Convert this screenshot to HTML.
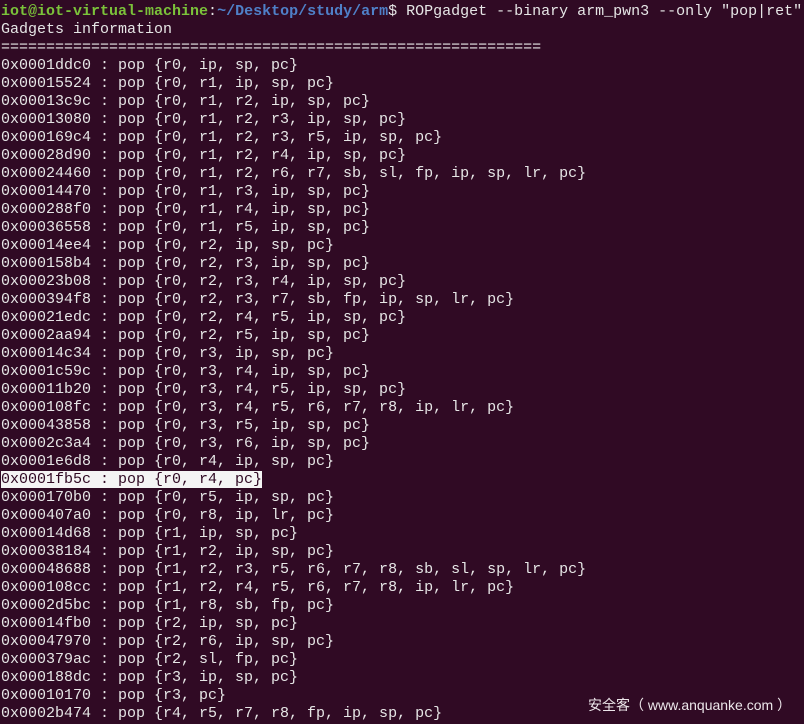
<!DOCTYPE html>
<html><head><meta charset="utf-8"><style>
html,body{margin:0;padding:0;background:#300a24;width:804px;height:724px;overflow:hidden}
pre{margin:0;padding:3px 0 0 1px;font-family:"Liberation Mono",monospace;font-size:15px;line-height:18px;color:#e6e6e6;white-space:pre}
.g{color:#7bc23a;font-weight:bold}.b{color:#4f80c8;font-weight:bold}
.h{background:#f4f4f4;color:#300a24}
.wm{position:absolute;left:588px;top:695px;font-family:"Liberation Sans","Noto Sans CJK SC",sans-serif;font-size:14px;color:#ece6ea;white-space:pre}
</style></head><body>
<pre><span class="g">iot@iot-virtual-machine</span>:<span class="b">~/Desktop/study/arm</span>$ ROPgadget --binary arm_pwn3 --only "pop|ret"
Gadgets information
============================================================
0x0001ddc0 : pop {r0, ip, sp, pc}
0x00015524 : pop {r0, r1, ip, sp, pc}
0x00013c9c : pop {r0, r1, r2, ip, sp, pc}
0x00013080 : pop {r0, r1, r2, r3, ip, sp, pc}
0x000169c4 : pop {r0, r1, r2, r3, r5, ip, sp, pc}
0x00028d90 : pop {r0, r1, r2, r4, ip, sp, pc}
0x00024460 : pop {r0, r1, r2, r6, r7, sb, sl, fp, ip, sp, lr, pc}
0x00014470 : pop {r0, r1, r3, ip, sp, pc}
0x000288f0 : pop {r0, r1, r4, ip, sp, pc}
0x00036558 : pop {r0, r1, r5, ip, sp, pc}
0x00014ee4 : pop {r0, r2, ip, sp, pc}
0x000158b4 : pop {r0, r2, r3, ip, sp, pc}
0x00023b08 : pop {r0, r2, r3, r4, ip, sp, pc}
0x000394f8 : pop {r0, r2, r3, r7, sb, fp, ip, sp, lr, pc}
0x00021edc : pop {r0, r2, r4, r5, ip, sp, pc}
0x0002aa94 : pop {r0, r2, r5, ip, sp, pc}
0x00014c34 : pop {r0, r3, ip, sp, pc}
0x0001c59c : pop {r0, r3, r4, ip, sp, pc}
0x00011b20 : pop {r0, r3, r4, r5, ip, sp, pc}
0x000108fc : pop {r0, r3, r4, r5, r6, r7, r8, ip, lr, pc}
0x00043858 : pop {r0, r3, r5, ip, sp, pc}
0x0002c3a4 : pop {r0, r3, r6, ip, sp, pc}
0x0001e6d8 : pop {r0, r4, ip, sp, pc}
<span class="h">0x0001fb5c : pop {r0, r4, pc}</span>
0x000170b0 : pop {r0, r5, ip, sp, pc}
0x000407a0 : pop {r0, r8, ip, lr, pc}
0x00014d68 : pop {r1, ip, sp, pc}
0x00038184 : pop {r1, r2, ip, sp, pc}
0x00048688 : pop {r1, r2, r3, r5, r6, r7, r8, sb, sl, sp, lr, pc}
0x000108cc : pop {r1, r2, r4, r5, r6, r7, r8, ip, lr, pc}
0x0002d5bc : pop {r1, r8, sb, fp, pc}
0x00014fb0 : pop {r2, ip, sp, pc}
0x00047970 : pop {r2, r6, ip, sp, pc}
0x000379ac : pop {r2, sl, fp, pc}
0x000188dc : pop {r3, ip, sp, pc}
0x00010170 : pop {r3, pc}
0x0002b474 : pop {r4, r5, r7, r8, fp, ip, sp, pc}</pre>
<div class="wm">安全客（ www.anquanke.com ）</div>
</body></html>
